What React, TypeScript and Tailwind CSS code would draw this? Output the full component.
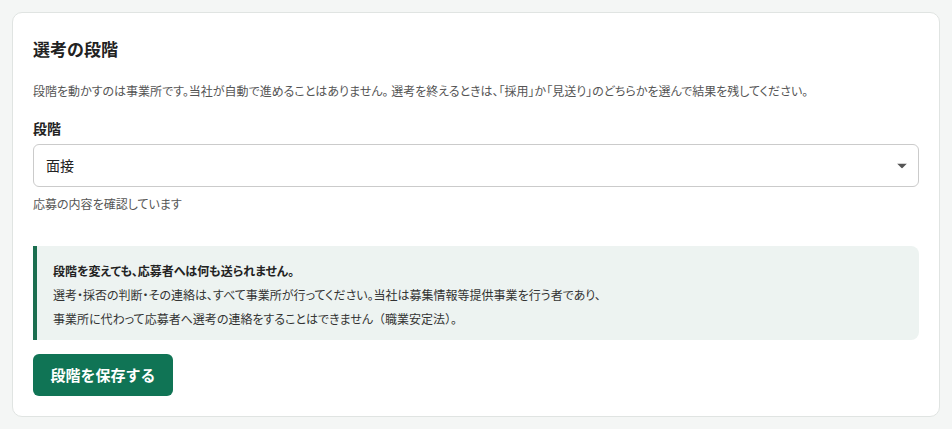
import { useState } from "react";

const FONT = "[font-family:'Noto_Sans_CJK_JP','Noto_Sans',sans-serif]";

export default function App() {
  const [stage, setStage] = useState("面接");

  return (
    <div className={`min-h-screen bg-[#f4f6f5] p-3 ${FONT}`}>
      <section className="rounded-[10px] border border-[#e0e4e2] bg-white px-5 pb-5 pt-5">
        <h2 className="text-[17px] font-bold leading-[32px] text-[#222]">選考の段階</h2>

        <p className="mt-4 text-[12px] leading-[20px] text-[#555] [font-feature-settings:'palt']">
          段階を動かすのは事業所です。当社が自動で進めることはありません。 選考を終えるときは、「採用」か「見送り」のどちらかを選んで結果を残してください。
        </p>

        <label className="mt-[17px] block text-[14px] font-bold leading-[20px] text-[#222]">段階</label>

        <div className="relative mt-[6px]">
          <select
            value={stage}
            onChange={(e) => setStage(e.target.value)}
            className="h-[43px] w-full appearance-none rounded-[6px] border border-[#cbcbcb] bg-white pl-3 pr-8 text-[14px] text-[#222] outline-none"
          >
            <option>書類選考</option>
            <option>面接</option>
            <option>採用</option>
            <option>見送り</option>
          </select>
          <svg
            className="pointer-events-none absolute right-3 top-1/2 -translate-y-1/2"
            width="10"
            height="5"
            viewBox="0 0 10 5"
          >
            <path d="M0 0h10L5 5z" fill="#555" />
          </svg>
        </div>

        <p className="mt-2 text-[12px] leading-[18px] text-[#555] [font-feature-settings:'palt']">応募の内容を確認しています</p>

        <div className="mt-[33px] rounded-r-[8px] border-l-4 border-[#1b6e50] bg-[#edf3f1] pb-[9px] pl-4 pr-4 pt-[13px] text-[12px] leading-[24px] text-[#333] [font-feature-settings:'palt']">
          <p className="font-bold text-[#222]">段階を変えても、応募者へは何も送られません。</p>
          <p>選考・採否の判断・その連絡は、すべて事業所が行ってください。当社は募集情報等提供事業を行う者であり、</p>
          <p>事業所に代わって応募者へ選考の連絡をすることはできません<span className="[font-feature-settings:normal]">（職業安定法）。</span></p>
        </div>

        <button className="mt-[14px] h-[42px] w-[140px] rounded-[6px] bg-[#107455] text-[15px] font-bold text-white">
          段階を保存する
        </button>
      </section>
    </div>
  );
}
